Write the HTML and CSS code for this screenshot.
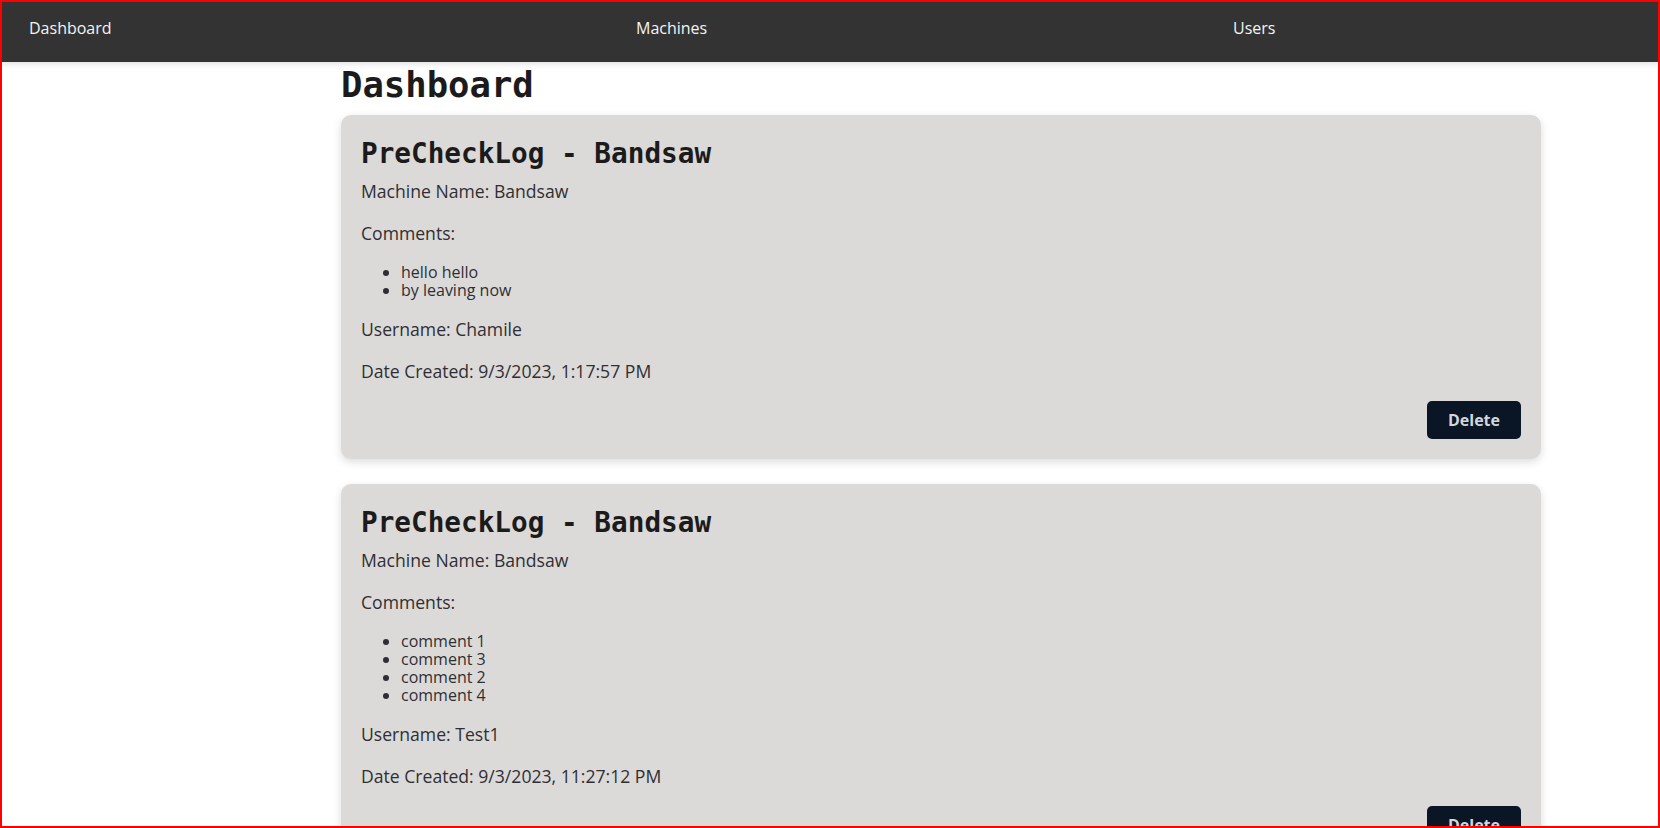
FILE: index.html
```html
<!DOCTYPE html>
<html lang="en">
<head>
<meta charset="utf-8">
<title>Dashboard</title>
<link rel="stylesheet" href="styles.css">
</head>
<body>
<div class="frame"></div>
<nav class="navbar">
  <a class="nav-link" href="#">Dashboard</a>
  <a class="nav-link" href="#">Machines</a>
  <a class="nav-link" href="#">Users</a>
</nav>
<main class="content">
  <h1 class="page-title">Dashboard</h1>
  <section class="card">
    <h2 class="card-title">PreCheckLog - Bandsaw</h2>
    <p class="field">Machine Name: Bandsaw</p>
    <p class="field">Comments:</p>
    <ul class="comments">
      <li>hello hello</li>
      <li>by leaving now</li>
    </ul>
    <p class="field">Username: Chamile</p>
    <p class="field">Date Created: 9/3/2023, 1:17:57 PM</p>
    <div class="actions"><button class="btn-delete">Delete</button></div>
  </section>
  <section class="card">
    <h2 class="card-title">PreCheckLog - Bandsaw</h2>
    <p class="field">Machine Name: Bandsaw</p>
    <p class="field">Comments:</p>
    <ul class="comments">
      <li>comment 1</li>
      <li>comment 3</li>
      <li>comment 2</li>
      <li>comment 4</li>
    </ul>
    <p class="field">Username: Test1</p>
    <p class="field">Date Created: 9/3/2023, 11:27:12 PM</p>
    <div class="actions"><button class="btn-delete">Delete</button></div>
  </section>
</main>
</body>
</html>
```
FILE: styles.css
```css
html, body {
  margin: 0;
  padding: 0;
  background: #ffffff;
}
body {
  font-family: "Open Sans", "Noto Sans", sans-serif;
  color: #2f2f33;
}
.frame {
  position: fixed;
  inset: 0;
  border: 2px solid #ff0000;
  pointer-events: none;
  z-index: 10;
}
.navbar {
  height: 62px;
  box-sizing: border-box;
  padding: 17px 0 0 29px;
  background: #333333;
  display: grid;
  grid-template-columns: 607px 597px auto;
  align-items: start;
  box-shadow: 0 2px 6px rgba(0, 0, 0, 0.12);
  position: relative;
}
.nav-link {
  color: #f4f4f4;
  text-decoration: none;
  font-size: 16px;
  line-height: 22px;
}
.content {
  margin-left: 341px;
  width: 1200px;
  padding-bottom: 40px;
}
.page-title {
  font-family: "DejaVu Sans Mono", "Liberation Mono", monospace;
  font-size: 35.6px;
  font-weight: 700;
  color: #1b1b1b;
  margin: 2px 0 9px;
  line-height: 42px;
}
.card {
  background: #dcdad9;
  border-radius: 10px;
  padding: 20px 20px 20px;
  margin-bottom: 25px;
  box-shadow: 0 3px 8px rgba(0, 0, 0, 0.14);
}
.card-title {
  font-family: "DejaVu Sans Mono", "Liberation Mono", monospace;
  font-size: 27.7px;
  font-weight: 700;
  color: #1b1b1b;
  line-height: 33px;
  margin: 2px 0 9px;
}
.field {
  font-size: 17.6px;
  line-height: 24px;
  margin: 0 0 18px;
}
.comments {
  margin: 0 0 18px;
  padding-left: 40px;
  font-size: 16px;
  line-height: 18px;
}
.actions {
  display: flex;
  justify-content: flex-end;
}
.btn-delete {
  font-family: "Open Sans", "Noto Sans", sans-serif;
  font-weight: 700;
  font-size: 16px;
  line-height: 22px;
  color: #d3d6dc;
  background: #0a1626;
  border: none;
  border-radius: 5px;
  padding: 8px 21px;
}
```
